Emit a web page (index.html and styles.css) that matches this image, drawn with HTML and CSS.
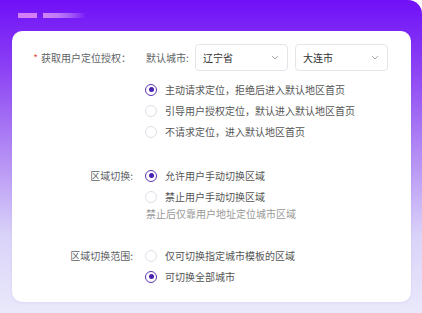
FILE: index.html
```html
<!DOCTYPE html>
<html lang="zh">
<head>
  <meta charset="UTF-8">
  <title>区域设置</title>
  <link rel="stylesheet" href="styles.css">
</head>
<body>

  <div class="frame">
    <div class="top-bars">
      <span class="bar bar-a"></span>
      <span class="bar bar-b"></span>
    </div>

    <div class="card">
      <!-- 定位授权 -->
      <div class="form-row">
        <div class="label label-tall"><span class="req">*</span>获取用户定位授权：</div>
        <div class="control">
          <div class="city-line">
            <span class="city-label">默认城市:</span>
            <div class="select">辽宁省<svg class="chev" viewBox="0 0 8 5"><path d="M1 1l3 3 3-3" /></svg></div>
            <div class="select">大连市<svg class="chev" viewBox="0 0 8 5"><path d="M1 1l3 3 3-3" /></svg></div>
          </div>
          <div class="radios radios-first">
            <label class="radio"><span class="dot on"></span>主动请求定位，拒绝后进入默认地区首页</label>
            <label class="radio"><span class="dot"></span>引导用户授权定位，默认进入默认地区首页</label>
            <label class="radio"><span class="dot"></span>不请求定位，进入默认地区首页</label>
          </div>
        </div>
      </div>

      <!-- 区域切换 -->
      <div class="form-row">
        <div class="label">区域切换:</div>
        <div class="control">
          <label class="radio"><span class="dot on"></span>允许用户手动切换区域</label>
          <label class="radio"><span class="dot"></span>禁止用户手动切换区域</label>
          <p class="hint">禁止后仅靠用户地址定位城市区域</p>
        </div>
      </div>

      <!-- 切换范围 -->
      <div class="form-row">
        <div class="label">区域切换范围:</div>
        <div class="control">
          <label class="radio"><span class="dot"></span>仅可切换指定城市模板的区域</label>
          <label class="radio"><span class="dot on"></span>可切换全部城市</label>
        </div>
      </div>
    </div>
  </div>

</body>
</html>
```

FILE: styles.css
```css
body {
  margin: 0;
  background: #ffffff;
  font-family: "Noto Sans CJK SC", "Noto Sans", sans-serif;
}

.frame {
  width: 422px;
  height: 313px;
  box-sizing: border-box;
  padding: 13px 11px 0 12px;
  border-radius: 0 14px 0 0;
  background: linear-gradient(180deg, #7010f8 0%, #8c42f4 22%, #b48ef4 50%, #d9d2f9 75%, #eae9fb 100%);
  overflow: hidden;
}

.top-bars {
  display: flex;
  gap: 6px;
  padding-left: 6px;
  height: 18px;
}

.bar {
  height: 5px;
}

.bar-a {
  width: 19px;
  background: #d57ff6;
}

.bar-b {
  width: 42px;
  background: linear-gradient(90deg, #cf86f6 0%, #bf7af6 35%, #a45cf7 65%, #7a20f8 100%);
}

.card {
  background: white;
  border-radius: 10px;
  height: 271px;
  box-sizing: border-box;
  padding: 13px 0 0;
  display: flex;
  flex-direction: column;
  gap: 23px;
  box-shadow: 0 1px 3px rgba(80, 40, 160, 0.08);
}

.form-row {
  display: flex;
  gap: 13px;
}

.label {
  width: 121px;
  flex-shrink: 0;
  text-align: right;
  font-size: 10px;
  line-height: 21px;
  color: #606266;
}

.label-tall {
  line-height: 27px;
  padding-right: 2px;
  box-sizing: border-box;
}

.req {
  color: #e0504a;
  margin-right: 3px;
}

.control {
  display: flex;
  flex-direction: column;
}

.city-line {
  display: flex;
  align-items: center;
  height: 27px;
}

.city-label {
  font-size: 10px;
  color: #606266;
  width: 49px;
}

.select {
  width: 93px;
  height: 27px;
  box-sizing: border-box;
  border: 1px solid #e4e6eb;
  border-radius: 4px;
  margin-right: 7px;
  padding: 0 8px 0 7px;
  display: flex;
  align-items: center;
  justify-content: space-between;
  font-size: 10px;
  color: #333;
}

.chev {
  width: 8px;
  height: 5px;
  fill: none;
  stroke: #a8abb2;
  stroke-width: 1;
}

.radios {
  display: flex;
  flex-direction: column;
}

.radios-first {
  margin-top: 8px;
}

.radio {
  display: flex;
  align-items: center;
  gap: 8px;
  height: 21px;
  font-size: 10px;
  color: #555;
  margin-left: -1px;
}

.dot {
  width: 12px;
  height: 12px;
  box-sizing: border-box;
  border: 1px solid #dcdfe6;
  border-radius: 50%;
  position: relative;
}

.dot.on {
  border-color: #5a36b6;
}

.dot.on::after {
  content: "";
  position: absolute;
  left: 2.5px;
  top: 2.5px;
  width: 5px;
  height: 5px;
  border-radius: 50%;
  background: #4a22b0;
}

.hint {
  margin: -1px 0 0;
  font-size: 10px;
  line-height: 16px;
  color: #999;
}
```
